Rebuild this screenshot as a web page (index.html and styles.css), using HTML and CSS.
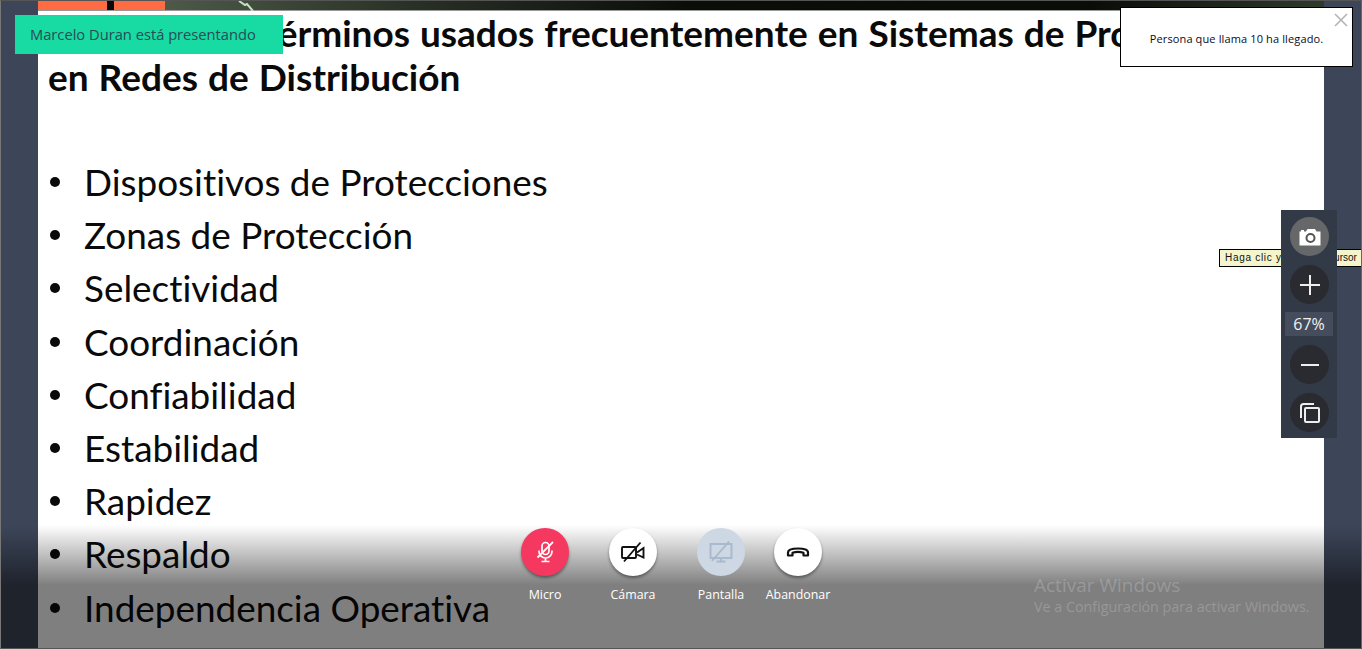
FILE: index.html
```html
<!DOCTYPE html>
<html lang="es">
<head>
    <meta charset="UTF-8">
    <meta name="viewport" content="width=device-width, initial-scale=1.0">
    <title>Presentación</title>
    <link rel="stylesheet" href="styles.css">
</head>
<body>
    <div class="stage">
        <!-- Shared slide -->
        <main class="slide">
            <div class="slide-header">
                <div class="header-logo"><span class="logo-bar"></span></div>
                <div class="header-photo">
                    <svg class="bolt" viewBox="0 0 30 10"><path d="M2 0 L8 4 L10 3 L16 10" fill="none" stroke="#c4e0c4" stroke-width="2"/></svg>
                </div>
            </div>
            <div class="slide-body">
                <h1 class="slide-title">
                    <span class="title-line title-first">Conceptos y términos usados frecuentemente en Sistemas de Protección</span>
                    <span class="title-line">en Redes de Distribución</span>
                </h1>
                <ul class="slide-list">
                    <li>Dispositivos de Protecciones</li>
                    <li>Zonas de Protección</li>
                    <li>Selectividad</li>
                    <li>Coordinación</li>
                    <li>Confiabilidad</li>
                    <li>Estabilidad</li>
                    <li>Rapidez</li>
                    <li>Respaldo</li>
                    <li>Independencia Operativa</li>
                </ul>
            </div>
        </main>

        <div class="fade"></div>

        <div class="presenter-toast">Marcelo Duran está presentando</div>

        <!-- Arrival notification -->
        <div class="notice">
            <svg class="notice-close" viewBox="0 0 14 14"><path d="M1 1 L13 13 M13 1 L1 13" stroke="#b4b4b4" stroke-width="1.6" fill="none"/></svg>
            <span class="notice-text">Persona que llama 10 ha llegado.</span>
        </div>

        <div class="tooltip">Haga clic y mueva <span class="tooltip-tail">cursor</span></div>

        <!-- Zoom tools -->
        <aside class="zoom-tools">
            <button class="tool tool-active">
                <svg viewBox="0 0 24 24" width="24" height="24">
                    <path d="M1.500 6.500 h1.500 v-1.500 h3 v1.500 h2 l1.500 -2.500 h7.500 l1.500 2.500 h4 v14 h-21 z" fill="#fff"/>
                    <circle cx="12.500" cy="13" r="4" fill="none" stroke="#555" stroke-width="2"/>
                </svg>
            </button>
            <button class="tool">
                <svg viewBox="0 0 24 24" width="24" height="24"><path d="M12 2 V22 M2 12 H22" stroke="#eee" stroke-width="2" fill="none"/></svg>
            </button>
            <div class="zoom-value">67%</div>
            <button class="tool">
                <svg viewBox="0 0 24 24" width="24" height="24"><path d="M3 12 H21" stroke="#eee" stroke-width="2" fill="none"/></svg>
            </button>
            <button class="tool">
                <svg viewBox="0 0 24 24" width="24" height="24">
                    <path d="M16 3 H5.500 Q3 3 3 5.500 V17" stroke="#eee" stroke-width="2" fill="none"/>
                    <rect x="7" y="7" width="14" height="14" rx="1" stroke="#eee" stroke-width="2" fill="none"/>
                </svg>
            </button>
        </aside>

        <!-- Call controls -->
        <nav class="controls">
            <div class="control">
                <div class="control-btn btn-red">
                    <svg viewBox="0 0 24 24" width="24" height="24" fill="none" stroke="#fff" stroke-width="1.700">
                        <rect x="9" y="2.500" width="7" height="12" rx="3.500"/>
                        <path d="M6 10.500 V11.500 A6.500 6.500 0 0 0 19 11.500 V10.500 M12.500 18 V21.500 M8.500 21.500 H16.500"/>
                        <path d="M20 2 L4.500 17.500" stroke-width="1.800"/>
                    </svg>
                </div>
                <span class="control-label">Micro</span>
            </div>
            <div class="control">
                <div class="control-btn">
                    <svg viewBox="0 0 24 24" width="24" height="24" fill="none" stroke="#111" stroke-width="1.900">
                        <rect x="1" y="7" width="14" height="11" rx="1"/>
                        <path d="M16 12.500 L22.500 8 V17.500 L16 14.500"/>
                        <path d="M19.500 2.500 L3 21.500"/>
                    </svg>
                </div>
                <span class="control-label">Cámara</span>
            </div>
            <div class="control">
                <div class="control-btn btn-muted">
                    <svg viewBox="0 0 24 24" width="24" height="24" fill="none" stroke="#a9b8cb" stroke-width="1.900">
                        <rect x="1.500" y="4" width="21" height="14"/>
                        <path d="M12 18 V21 M7.500 21.500 H16.500"/>
                        <path d="M20 1.500 L3 21"/>
                    </svg>
                </div>
                <span class="control-label">Pantalla</span>
            </div>
            <div class="control control-narrow">
                <div class="control-btn">
                    <svg viewBox="0 0 24 24" width="24" height="24" fill="none" stroke="#111" stroke-width="2.200">
                        <path d="M2 15.500 V12.500 Q2 8.500 12 8.500 Q22 8.500 22 12.500 V15.500 H17.500 V12.800 Q12 11 6.500 12.800 V15.500 Z" stroke-linejoin="round"/>
                    </svg>
                </div>
                <span class="control-label">Abandonar</span>
            </div>
        </nav>

        <div class="watermark">
            <div class="watermark-title">Activar Windows</div>
            <div class="watermark-text">Ve a Configuración para activar Windows.</div>
        </div>
    </div>
</body>
</html>
```

FILE: styles.css
```css
* {
    box-sizing: border-box;
}

html, body {
    margin: 0;
    height: 100%;
    overflow: hidden;
}

.stage {
    position: relative;
    width: 1362px;
    height: 649px;
    padding: 0 37px;
    overflow: hidden;
    background-color: #3d4659;
    border-left: 1px solid #777;
    border-right: 1px solid #666;
    border-top: 1px solid #555;
    border-bottom: 1px solid #555;
    font-family: "Open Sans", sans-serif;
}

/* Slide */
.slide {
    height: 100%;
    background-color: #fff;
    display: flex;
    flex-direction: column;
}

.slide-header {
    display: flex;
    height: 10px;
    flex-shrink: 0;
    border-bottom: 1px solid #999;
}

.header-logo {
    width: 127px;
    background-color: #ff6c43;
    padding-left: 69px;
}

.logo-bar {
    display: block;
    width: 7px;
    height: 100%;
    background-color: #0a0a0a;
}

.header-photo {
    flex: 1;
    background: linear-gradient(to right, #4d5a48 0%, #2a3327 20%, #0b0d09 45%, #0a0c08 80%, #2f3a2c 100%);
}

.bolt {
    display: block;
    width: 30px;
    height: 10px;
    margin-left: 72px;
}

.slide-body {
    padding: 0 0 0 10px;
    color: #0a0a0a;
    font-family: Lato, "Liberation Sans", sans-serif;
    font-variant-ligatures: none;
}

.slide-title {
    margin: 0;
    font-size: 37px;
    font-weight: 700;
    line-height: 44px;
    word-spacing: 1px;
}

.title-line {
    display: block;
    white-space: nowrap;
}

.title-first {
    text-indent: 3px;
}

.slide-list {
    list-style: none;
    margin: 57px 0 0;
    padding: 0;
    font-size: 36.9px;
    line-height: 53.2px;
}

.slide-list li {
    position: relative;
    padding-left: 36px;
}

.slide-list li::before {
    content: "";
    position: absolute;
    left: 2px;
    top: 21px;
    width: 10px;
    height: 10px;
    border-radius: 50%;
    background-color: #0a0a0a;
}

/* Dark fade at the bottom of the window */
.fade {
    position: absolute;
    left: 0;
    right: 0;
    top: 524px;
    bottom: 0;
    background: linear-gradient(to bottom, rgba(0, 0, 0, 0) 0, rgba(0, 0, 0, 0.5) 60px);
}

.presenter-toast {
    position: absolute;
    left: 14px;
    top: 14px;
    width: 268px;
    height: 39px;
    padding-left: 15px;
    line-height: 39px;
    font-size: 14.7px;
    color: #2b4a55;
    background-color: #17dba3;
}

/* Notification */
.notice {
    position: absolute;
    left: 1119px;
    top: 6px;
    width: 233px;
    height: 60px;
    display: flex;
    align-items: center;
    justify-content: center;
    padding-top: 3px;
    background-color: #fff;
    border: 1px solid #000;
    font-size: 11px;
    letter-spacing: 0.13px;
    color: #0a0a1e;
}

.notice-close {
    position: absolute;
    right: 4px;
    top: 5px;
    width: 14px;
    height: 14px;
}

/* Tooltip under the zoom tools */
.tooltip {
    position: absolute;
    left: 1218px;
    top: 248px;
    width: 143px;
    height: 18px;
    padding-left: 5px;
    background-color: #f5f5cc;
    border: 1px solid #000;
    font-family: "Liberation Sans", sans-serif;
    font-size: 10px;
    letter-spacing: 0.7px;
    line-height: 16px;
    white-space: nowrap;
    color: #111;
}

.tooltip-tail {
    margin-left: 7px;
    letter-spacing: 0;
}

.zoom-tools {
    position: absolute;
    left: 1280px;
    top: 209px;
    width: 56px;
    height: 228px;
    padding: 7px 3px 0 4px;
    display: flex;
    flex-direction: column;
    align-items: center;
    background-color: #333a47;
}

.tool {
    width: 39px;
    height: 39px;
    padding: 0;
    flex-shrink: 0;
    display: flex;
    align-items: center;
    justify-content: center;
    border: none;
    border-radius: 50%;
    background-color: #2a2b30;
    margin-bottom: 9px;
}

.tool-active {
    background-color: #666769;
}

.zoom-value {
    width: 48px;
    height: 24px;
    margin: -1px 1px 9px 0;
    flex-shrink: 0;
    text-align: center;
    line-height: 24px;
    font-size: 16px;
    color: #f2f2f2;
    background-color: #454d5c;
}

/* Call controls */
.controls {
    position: absolute;
    left: 500px;
    top: 527px;
    display: flex;
}

.control {
    width: 88px;
    display: flex;
    flex-direction: column;
    align-items: center;
}

.control-narrow {
    width: 66px;
}

.control-btn {
    width: 48px;
    height: 48px;
    display: flex;
    align-items: center;
    justify-content: center;
    border-radius: 50%;
    background-color: #fff;
    box-shadow: 0 2px 3px rgba(0, 0, 0, 0.4);
}

.btn-red {
    background-color: #f5385f;
}

.btn-muted {
    background-color: #cdd8e4;
    box-shadow: none;
}

.control-label {
    margin-top: 10px;
    font-size: 12.4px;
    line-height: 18px;
    white-space: nowrap;
    color: #fff;
}

.watermark {
    position: absolute;
    left: 1033px;
    top: 571px;
    color: rgba(255, 255, 255, 0.2);
}

.watermark-title {
    font-size: 19px;
    line-height: 26px;
}

.watermark-text {
    font-size: 14.3px;
    line-height: 20px;
    margin-top: -1px;
}
```
